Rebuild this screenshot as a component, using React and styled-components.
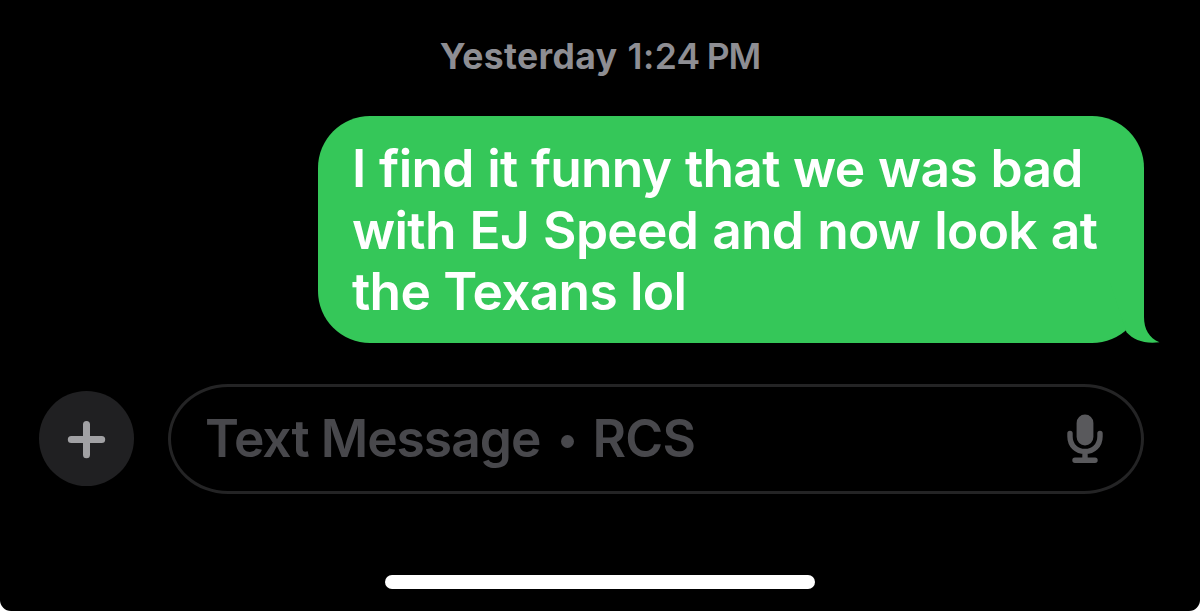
import React from "react";
import styled, { createGlobalStyle } from "styled-components";

const GlobalStyle = createGlobalStyle`
  *, *::before, *::after { box-sizing: border-box; }
  html { background: #fff; }
  body { margin: 0; overflow: hidden; }
`;

const Screen = styled.main`
  display: flex;
  flex-direction: column;
  width: 1200px;
  height: 611px;
  background: #000;
  border-radius: 0 0 11px 11px;
  font-family: Inter, "Liberation Sans", sans-serif;
`;

const Timestamp = styled.time`
  display: flex;
  justify-content: center;
  height: 44px;
  margin-top: 35px;
  line-height: 44px;
  font-size: 35.5px;
  color: #8e8e93;
  white-space: pre;
`;

const StampPart = styled.span`
  font-weight: ${(p) => p.$weight};
  letter-spacing: ${(p) => p.$tracking}px;
  margin-right: ${(p) => p.$gap || 0}px;
`;

const MessageRow = styled.div`
  display: flex;
  justify-content: flex-end;
  margin-top: 37px;
  padding-right: 56px;
`;

const Bubble = styled.div`
  position: relative;
  width: 826px;
  height: 227px;
  padding: 22px 0 0 34px;
  border-radius: 52px;
  background: #35c759;
`;

const Tail = styled.svg`
  position: absolute;
  right: -16px;
  bottom: 0;
  width: 60px;
  height: 60px;
`;

const Line = styled.div`
  position: relative;
  height: 61.5px;
  line-height: 61.5px;
  font-size: 51.5px;
  font-weight: 600;
  letter-spacing: -0.7px;
  word-spacing: ${(p) => p.$wordGap}px;
  color: #fff;
  white-space: nowrap;
`;

const Composer = styled.div`
  display: flex;
  align-items: center;
  gap: 34px;
  height: 110px;
  margin-top: 41px;
  padding: 0 56px 0 39px;
`;

const AddButton = styled.button`
  display: flex;
  flex: none;
  width: 95px;
  height: 95px;
  margin-bottom: 1px;
  padding: 0;
  border: 0;
  border-radius: 50%;
  background: #202022;
`;

const Field = styled.div`
  display: flex;
  flex: 1;
  align-items: center;
  justify-content: space-between;
  height: 110px;
  padding: 0 38px 0 34px;
  border: 3px solid #242425;
  border-radius: 60px / 55px;
`;

const Placeholder = styled.span`
  display: flex;
  margin-bottom: 2px;
  font-size: 51.5px;
  line-height: 62px;
  font-weight: 600;
  color: #48484c;
  white-space: pre;
`;

const Word = styled.span`
  letter-spacing: ${(p) => p.$tracking || 0}px;
`;

const Bullet = styled.i`
  align-self: center;
  width: 13px;
  height: 13px;
  margin: 7px 18px 0 21px;
  border-radius: 50%;
  background: #48484c;
`;

const HomeIndicator = styled.div`
  width: 430px;
  height: 14px;
  margin: 80.5px auto 0;
  border-radius: 7px;
  background: #fff;
`;

const PlusIcon = () => (
  <svg width="95" height="95" viewBox="0 0 95 95" stroke="#a1a1a4" strokeWidth="7" strokeLinecap="round">
    <path d="M32.3 48.6H62.7M47.5 33.4V63.8" />
  </svg>
);

const MicIcon = () => (
  <svg width="36" height="50" viewBox="0 0 36 50" fill="none">
    <rect x="9.6" y="0.5" width="16.8" height="31" rx="8.4" fill="#59595c" />
    <path
      d="M3 19.5V22.5C3 31.5 9.5 37.5 18 37.5S33 31.5 33 22.5V19.5M18 38V46M8 46.2H28"
      stroke="#59595c"
      strokeWidth="5.4"
      strokeLinecap="round"
    />
  </svg>
);

export default function App() {
  return (
    <>
      <GlobalStyle />
      <Screen>
        <Timestamp>
          <StampPart $weight={700} $tracking={0.4} $gap={10}>Yesterday</StampPart>
          <StampPart $weight={600} $tracking={0.4} $gap={6}>1:24</StampPart>
          <StampPart $weight={600} $tracking={-1}>PM</StampPart>
        </Timestamp>
        <MessageRow>
          <Bubble>
            <Line $wordGap={1.2}>I find it funny that we was bad</Line>
            <Line $wordGap={1.6}>with EJ Speed and now look at</Line>
            <Line $wordGap={0.8}>the Texans lol</Line>
            <Tail viewBox="0 0 60 60">
              <path d="M4 60.5C15 59 21 55 26.5 49.2C34 57 44 61 60 59.2V60.5Z" fill="#000" />
              <path d="M10 0H44V34C44 46 49 55 59.5 59.2C44 61 34 57 26.5 49.2Z" fill="#35c759" />
            </Tail>
          </Bubble>
        </MessageRow>
        <Composer>
          <AddButton aria-label="Add">
            <PlusIcon />
          </AddButton>
          <Field>
            <Placeholder>
              <Word $tracking={-1}>Text Message</Word>
              <Bullet />
              <Word $tracking={-0.7}>RCS</Word>
            </Placeholder>
            <MicIcon />
          </Field>
        </Composer>
        <HomeIndicator />
      </Screen>
    </>
  );
}
